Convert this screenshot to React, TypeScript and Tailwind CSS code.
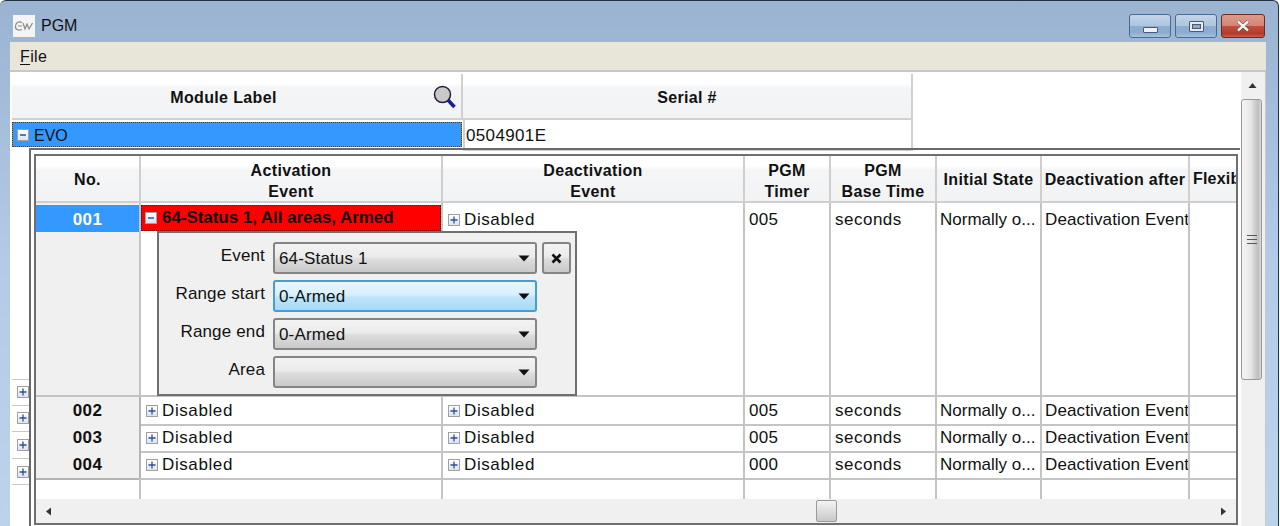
import type { ReactNode } from "react";

const cols = "grid-cols-[105px_302px_302px_86px_106px_105px_148px_48px]";
const headBg = "bg-[linear-gradient(to_bottom,#ffffff_0%,#ffffff_22%,#f4f5f7_32%,#f2f3f5_100%)]";
const comboBg = "bg-[linear-gradient(to_bottom,#f3f3f3_0%,#ebebeb_45%,#dcdcdc_55%,#c9c9c9_100%)]";
const capBtn = "bg-[linear-gradient(to_bottom,#c3d5e9_0%,#adc5de_48%,#8eadcf_52%,#8aaccf_80%,#a5c3e0_100%)]";

function Tree({ open }: { open?: boolean }) {
  return (
    <span className="inline-flex h-[12px] w-[12px] shrink-0 items-center justify-center border border-[#a0a0a0] bg-gradient-to-b from-white to-[#dde3ee]">
      <svg width="8" height="8" viewBox="0 0 8 8">
        <path d={open ? "M1 4H7" : "M0.5 4H7.5M4 0.5V7.5"} stroke="#2f4f96" strokeWidth="1.3" />
      </svg>
    </span>
  );
}

function HeadCell({ lines }: { lines: string[] }) {
  return (
    <div className={`flex h-[47px] flex-col items-center justify-center overflow-hidden whitespace-nowrap border-r-2 border-b-2 border-[#cfcfcf] text-[16px] leading-[21px] font-bold ${lines.length > 1 ? "pt-[5px]" : "pt-[1px]"} ${headBg}`}>
      {lines.map((l) => (
        <span key={l}>{l}</span>
      ))}
    </div>
  );
}

function Cell({ children, className = "" }: { children?: ReactNode; className?: string }) {
  return <div className={`flex items-center overflow-hidden whitespace-nowrap border-r-2 border-b-2 border-[#c4c4c4] pt-[1px] ${className}`}>{children}</div>;
}

function Row({ no, timer }: { no: string; timer: string }) {
  return (
    <div className={`grid h-[27px] ${cols}`}>
      <div className="flex items-center justify-center border-r-2 border-b-2 border-[#b4b4b4] bg-[#f0f0f0] pt-[1px] font-bold">{no}</div>
      <Cell className="pl-[5px] tracking-[0.6px]">
        <Tree />
        <span className="ml-[4px]">Disabled</span>
      </Cell>
      <Cell className="pl-[5px] tracking-[0.6px]">
        <Tree />
        <span className="ml-[4px]">Disabled</span>
      </Cell>
      <Cell className="pl-[4px]">{timer}</Cell>
      <Cell className="pl-[4px] tracking-[0.5px]">seconds</Cell>
      <Cell className="pl-[3px] tracking-normal">Normally o...</Cell>
      <Cell className="pl-[3px] tracking-[0.13px]">Deactivation Event</Cell>
      <Cell />
    </div>
  );
}

function Combo({ value, focus }: { value: string; focus?: boolean }) {
  return (
    <div
      className={`flex h-[32px] w-[264px] items-center justify-between rounded-[3px] border-2 pt-[1px] pr-[3px] pl-[4px] ${
        focus ? "border-[#4a9bd0] bg-[linear-gradient(to_bottom,#e8f6fd_0%,#d8f0fc_45%,#bde4f9_55%,#a6dbf6_100%)]" : `border-[#858585] ${comboBg}`
      }`}
    >
      <span>{value}</span>
      <svg width="12" height="7" viewBox="0 0 12 7" className="mr-[2px]">
        <path d="M0.5 0.5H11.5L6 6.5Z" fill="#111" />
      </svg>
    </div>
  );
}

function Field({ label, value, focus, close }: { label: string; value: string; focus?: boolean; close?: boolean }) {
  return (
    <div className="flex h-[38px] items-center">
      <span className="w-[106px] pb-[5px] text-right">{label}</span>
      <div className="ml-[8px]">
        <Combo value={value} focus={focus} />
      </div>
      {close && (
        <div className={`ml-[5px] flex h-[32px] w-[29px] items-center justify-center rounded-[3px] border-2 border-[#858585] ${comboBg}`}>
          <svg width="11" height="11" viewBox="0 0 11 11">
            <path d="M1.5 1.5L9.5 9.5M9.5 1.5L1.5 9.5" stroke="#111" strokeWidth="2.6" />
          </svg>
        </div>
      )}
    </div>
  );
}

function Arrow({ d }: { d: string }) {
  return (
    <svg width="9" height="9" viewBox="0 0 9 9">
      <path d={d} fill="#333" />
    </svg>
  );
}

export default function App() {
  return (
    <div className="relative flex h-[526px] w-[1279px] flex-col overflow-hidden rounded-t-[6px] border-t border-r border-[#22303f] bg-gradient-to-b from-[#9ab3d1] via-[#b3cbe6] to-[#bcd3ec] text-[17px] tracking-[0.35px] text-[#111] [font-family:'Liberation_Sans',Arial,sans-serif]">
      <header className="flex h-[41px] shrink-0 items-center pt-[9px] pr-[13px] pl-[13px]">
        <div className="flex h-[22px] w-[22px] items-center justify-center bg-[#f4f4f4]">
          <svg width="20" height="12" viewBox="0 0 20 12">
            <path d="M8 2.5C5 1 2 2 1.5 6S5 11 8 9.5M4 6H8M9 3L11 9L13 4L15 9L18.5 3" fill="none" stroke="#888" strokeWidth="1.2" />
          </svg>
        </div>
        <span className="ml-[6px] text-[16px] tracking-normal">PGM</span>
        <div className="ml-auto flex items-center gap-[4px]">
          <div className={`flex h-[24px] w-[42px] items-center justify-center rounded-[3px] border border-[#4c6a8e] ${capBtn}`}>
            <span className="mt-[8px] h-[6px] w-[15px] rounded-[1px] border border-[#4a5a70] bg-[#eef0f2]" />
          </div>
          <div className={`flex h-[24px] w-[42px] items-center justify-center rounded-[3px] border border-[#4c6a8e] ${capBtn}`}>
            <span className="flex h-[11px] w-[15px] items-center justify-center rounded-[1px] border border-[#4a5a70] bg-[#e6ebf0]">
              <span className="h-[5px] w-[9px] border border-[#4a5a70] bg-[#8fa9c7]" />
            </span>
          </div>
          <div className="flex h-[24px] w-[44px] items-center justify-center rounded-[3px] border border-[#6b2a22] bg-[linear-gradient(to_bottom,#dc9c8e_0%,#d58573_48%,#c0503b_52%,#b23a28_85%,#c9614c_100%)]">
            <svg width="16" height="12" viewBox="0 0 16 12">
              <path d="M3 1.5L13 10.5M13 1.5L3 10.5" stroke="#4a4040" strokeWidth="3.6" />
              <path d="M3 1.5L13 10.5M13 1.5L3 10.5" stroke="#f3f3f3" strokeWidth="2.4" />
            </svg>
          </div>
        </div>
      </header>

      <div className="flex min-h-0 flex-1 flex-col pr-[12px] pl-[10px]">
        <div className="flex h-[28px] shrink-0 items-center bg-[#e8e6d9] pt-[1px] pl-[10px] text-[16px]">
          <span>
            <span className="underline underline-offset-2">F</span>ile
          </span>
        </div>
        <div className="flex min-h-0 flex-1 border-t-2 border-r border-[#c8c8c8] bg-white">
          <div className="min-w-0 flex-1 pt-[2px] pl-[2px]">
            {/* module table */}
            <div className="grid h-[46px] w-[901px] grid-cols-[451px_450px]">
              <div className={`relative flex items-center justify-center border-r-2 border-b-2 border-[#d0d0d0] pt-[3px] pr-[26px] text-[16px] font-bold ${headBg}`}>
                Module Label
                <svg width="26" height="26" viewBox="0 0 26 26" className="absolute top-[10px] right-[3px]">
                  <path d="M15 15L22.5 23" stroke="#1d1d9c" strokeWidth="3.6" />
                  <circle cx="10.5" cy="10.5" r="8" fill="#c9c9c9" stroke="#2a1a3a" strokeWidth="1.5" />
                </svg>
              </div>
              <div className={`flex items-center justify-center border-r-2 border-b-2 border-[#d0d0d0] pt-[3px] text-[16px] font-bold ${headBg}`}>Serial #</div>
            </div>
            <div className="grid h-[28px] w-[901px] grid-cols-[451px_450px]">
              <div className="mt-[2px] mr-[1px] flex h-[25px] items-center border border-dotted border-[#5a3a10] bg-[#3399ff] pl-[4px]">
                <Tree open />
                <span className="ml-[5px] pt-[3px] text-[16px] tracking-normal">EVO</span>
              </div>
              <div className="flex items-center border-r-2 border-b-2 border-l-2 border-[#d0d0d0] pt-[3px] pl-[1px]">0504901E</div>
            </div>

            <div className="flex">
              {/* tree gutter */}
              <div className="w-[17px] shrink-0 overflow-hidden pt-[231px]">
                {[0, 1, 2, 3].map((i) => (
                  <div key={i} className={`flex h-[26.6px] items-center border-b border-[#c8c8c8] pl-[5px] ${i === 0 ? "border-t" : ""}`}>
                    <Tree />
                  </div>
                ))}
              </div>
              {/* child table frame */}
              <div className="h-[378px] w-[1211px] shrink-0 border-t-2 border-l-2 border-[#6a6a6a] pt-[4px] pl-[3px]">
                <div className="relative h-[371px] w-[1204px] overflow-hidden border-2 border-[#6f6f6f]">
                  <div className={`grid ${cols}`}>
                    <HeadCell lines={["No."]} />
                    <HeadCell lines={["Activation", "Event"]} />
                    <HeadCell lines={["Deactivation", "Event"]} />
                    <HeadCell lines={["PGM", "Timer"]} />
                    <HeadCell lines={["PGM", "Base Time"]} />
                    <HeadCell lines={["Initial State"]} />
                    <HeadCell lines={["Deactivation after"]} />
                    <div className={`flex h-[47px] items-center overflow-hidden border-b-2 border-[#cfcfcf] pt-[1px] pl-[3px] text-[16px] font-bold tracking-[0.2px] ${headBg}`}>Flexib</div>
                  </div>

                  <div className={`grid h-[194px] ${cols}`}>
                    <div className="border-r-2 border-b-2 border-[#c4c4c4] bg-[#f0f0f0] pt-[2px]">
                      <div className="flex h-[27px] items-center justify-center bg-[#3399ff] pt-[2px] font-bold text-white">001</div>
                    </div>
                    <div className="border-r-2 border-b-2 border-[#c4c4c4] pt-[2px]">
                      <div className="flex h-[26px] items-center overflow-hidden whitespace-nowrap border border-dotted border-[#5a1010] bg-[#ff0000] pl-[3px] font-bold tracking-[-0.05px]">
                        <Tree open />
                        <span className="ml-[5px]">64-Status 1, All areas, Armed</span>
                      </div>
                    </div>
                    <div className="border-r-2 border-b-2 border-[#c4c4c4] pt-[2px] pl-[5px] tracking-[0.6px]">
                      <div className="flex h-[28px] items-center pt-[1px]">
                        <Tree />
                        <span className="ml-[4px]">Disabled</span>
                      </div>
                    </div>
                    {[
                      { t: "005", c: "pl-[4px]" },
                      { t: "seconds", c: "pl-[4px] tracking-[0.5px]" },
                      { t: "Normally o...", c: "pl-[3px] tracking-normal" },
                      { t: "Deactivation Event", c: "pl-[3px] tracking-[0.13px]" },
                      { t: "", c: "" },
                    ].map((d, i) => (
                      <div key={i} className={`overflow-hidden whitespace-nowrap border-r-2 border-b-2 border-[#c4c4c4] pt-[3px] ${d.c}`}>
                        <div className="flex h-[28px] items-center">{d.t}</div>
                      </div>
                    ))}
                  </div>

                  <Row no="002" timer="005" />
                  <Row no="003" timer="005" />
                  <Row no="004" timer="000" />

                  <div className={`grid h-[21px] ${cols}`}>
                    {[0, 1, 2, 3, 4, 5, 6].map((i) => (
                      <div key={i} className="border-r-2 border-[#c4c4c4]" />
                    ))}
                  </div>

                  {/* horizontal scrollbar */}
                  <div className="flex h-[24px] items-center justify-between bg-[#f0f0f0] px-[8px]">
                    <Arrow d="M7 0.5V8.5L2 4.5Z" />
                    <Arrow d="M2 0.5V8.5L7 4.5Z" />
                  </div>
                  <div className="absolute bottom-[1px] left-[780px] h-[22px] w-[21px] rounded-[2px] border border-[#9a9a9a] bg-gradient-to-b from-[#f4f4f4] to-[#c8c8c8]" />

                  {/* popup editor */}
                  <div className="absolute top-[75px] left-[121px] flex h-[165px] w-[420px] flex-col border-2 border-[#6f6f6f] bg-[#f0f0f0] pt-[6px] tracking-[0.15px]">
                    <Field label="Event" value="64-Status 1" close />
                    <Field label="Range start" value="0-Armed" focus />
                    <Field label="Range end" value="0-Armed" />
                    <Field label="Area" value="" />
                  </div>
                </div>
              </div>
            </div>
          </div>

          {/* vertical scrollbar */}
          <div className="flex w-[24px] shrink-0 flex-col bg-[#f0f0f0]">
            <div className="flex h-[27px] items-center justify-center pr-[1px]">
              <Arrow d="M0.5 7H8.5L4.5 2Z" />
            </div>
            <div className="flex h-[281px] w-[21px] items-center justify-center rounded-[3px] border border-[#9a9a9a] bg-[linear-gradient(to_right,#f4f4f4_0%,#e8e8e8_45%,#bdbdbd_85%,#dcdcdc_100%)]">
              <svg width="10" height="11" viewBox="0 0 10 11">
                <path d="M0 1.5H10M0 5.5H10M0 9.5H10" stroke="#555" strokeWidth="1.2" />
              </svg>
            </div>
          </div>
        </div>
      </div>
    </div>
  );
}
